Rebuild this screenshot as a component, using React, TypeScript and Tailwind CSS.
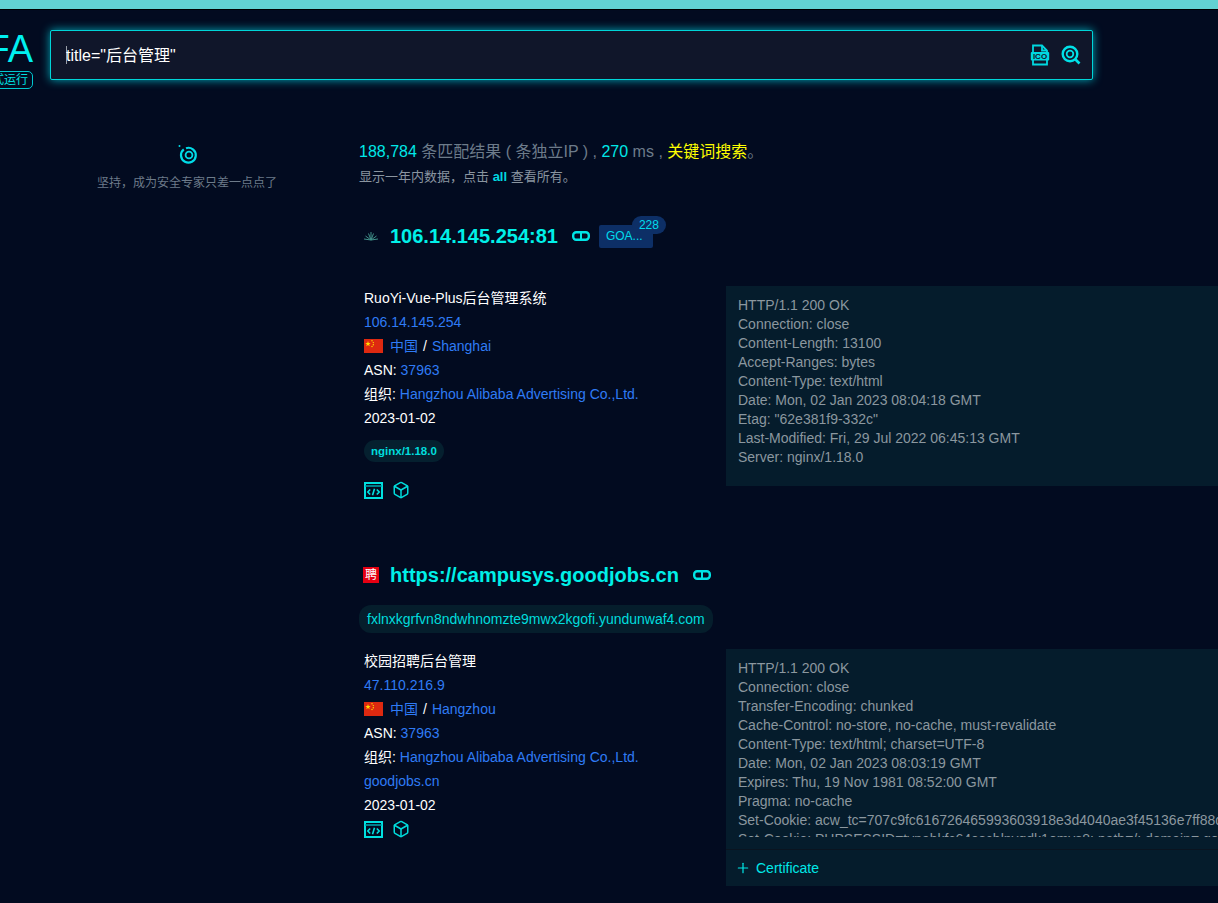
import React from 'react';
import { Box, Plus } from 'lucide-react';

const font = { fontFamily: '"Liberation Sans", "Noto Sans CJK SC", sans-serif' };

function LinkIcon() {
  return (
    <svg width="18" height="10" viewBox="0 0 18 10" fill="none" stroke="#00e5e5" className="shrink-0">
      <rect x="1.200" y="1.300" width="15.600" height="7.400" rx="3" strokeWidth="2.400" />
      <path d="M9 1.500V8.500" strokeWidth="2" />
    </svg>
  );
}

function CodeIcon() {
  return (
    <svg width="19" height="17" viewBox="0 0 19 17" fill="none" className="shrink-0">
      <rect x="1" y="1" width="17" height="15" stroke="#00e0e0" strokeWidth="2" />
      <path d="M1 4H18" stroke="#00a8b0" strokeWidth="1.500" />
      <path d="M6.200 7.500L3.800 10L6.200 12.500M12.800 7.500L15.200 10L12.800 12.500M10.500 6.800L8.500 13.200" stroke="#00e0e0" strokeWidth="1.600" />
    </svg>
  );
}

function ActionIcons() {
  return (
    <div className="flex items-center gap-[9px]">
      <CodeIcon />
      <Box size={18} strokeWidth={2} color="#00dcdc" />
    </div>
  );
}

function Flag() {
  return (
    <svg width="19" height="14" viewBox="0 0 19 14" className="shrink-0">
      <rect width="19" height="14" fill="#de2910" />
      <path d="M4 2l.7 2h2l-1.600 1.200.6 2L4 6l-1.700 1.200.6-2L1.300 4h2z" fill="#ffde00" />
      <circle cx="8" cy="1.800" r=".7" fill="#ffde00" />
      <circle cx="9.300" cy="3.600" r=".7" fill="#ffde00" />
      <circle cx="9.300" cy="5.800" r=".7" fill="#ffde00" />
      <circle cx="8" cy="7.500" r=".7" fill="#ffde00" />
    </svg>
  );
}

function Info({ title, ip, city, domain, date }: { title: string; ip: string; city: string; domain?: string; date: string }) {
  return (
    <div className="text-[14px] leading-[24px] text-white">
      <div>{title}</div>
      <div className="text-[#2f7bf5]">{ip}</div>
      <div className="flex items-center">
        <Flag />
        <span className="ml-[7px] text-[#2f7bf5]">中国</span>
        <span className="mx-[5px]">/</span>
        <span className="text-[#2f7bf5]">{city}</span>
      </div>
      <div>
        ASN: <span className="text-[#2f7bf5]">37963</span>
      </div>
      <div>
        组织: <span className="text-[#2f7bf5]">Hangzhou Alibaba Advertising Co.,Ltd.</span>
      </div>
      {domain && <div className="text-[#2f7bf5]">{domain}</div>}
      <div>{date}</div>
    </div>
  );
}

function Banner({ lines, className }: { lines: string[]; className: string }) {
  return (
    <div className={`overflow-hidden whitespace-nowrap px-3 pt-[10px] text-[14px] leading-[19px] text-[#8b979f] ${className}`}>
      {lines.map((line) => (
        <div key={line}>{line}</div>
      ))}
    </div>
  );
}

export default function App() {
  return (
    <div style={font} className="h-[903px] w-[1218px] overflow-hidden bg-[#020b20]">
      <div className="h-[10px] border-b border-black bg-[#62d2d2]" />

      <header className="flex h-[70px] items-start pt-5">
        <div className="flex h-[60px] w-[50px] shrink-0 flex-col items-end overflow-hidden pr-[17px]">
          <div className="whitespace-nowrap text-[38px] leading-[38px] text-[#00f0f0]">FA</div>
          <div className="mt-[3px] shrink-0 whitespace-nowrap rounded-[5px] border border-[#00c8d0] px-[4px] text-[12px] leading-[16px] text-[#00e0e0]">
            正式运行
          </div>
        </div>
        <div className="flex h-[50px] w-[1043px] items-center rounded-[2px] border border-[#00d5d8] bg-[#10162a] pl-[15px] pr-[11px] shadow-[0_0_10px_#00a8b8]">
          <span className="-mr-[1px] h-[18px] w-[1px] bg-[#9aa0aa]" />
          <span className="flex-1 pt-[2px] text-[16px] text-white">title="后台管理"</span>
          <svg width="20" height="22" viewBox="0 0 20 22" fill="none" className="mr-[11px]">
            <path d="M3 8V1.500H12L17 6.500V20.500H3V16" stroke="#00d8e0" strokeWidth="1.800" />
            <path d="M12 1.500V6.500H17" stroke="#00d8e0" strokeWidth="1.800" />
            <rect x="0.800" y="8" width="18.400" height="8.500" rx="1" fill="#00d8e0" />
            <text x="10" y="15.200" textAnchor="middle" fontSize="8" fontWeight="bold" fill="#10162a" style={font}>
              ICO
            </text>
          </svg>
          <svg width="20" height="20" viewBox="0 0 20 20" fill="none" stroke="#00e0e8">
            <circle cx="9" cy="9" r="7.300" strokeWidth="2.400" />
            <circle cx="9" cy="9" r="3.300" strokeWidth="1.800" />
            <path d="M14 14L18.500 18.500" strokeWidth="2.600" />
          </svg>
        </div>
      </header>

      <main className="flex">
        <aside className="flex w-[359px] shrink-0 flex-col items-center pl-[15px] pt-[63px]">
          <svg width="24" height="24" viewBox="0 0 24 24" fill="none" stroke="#00dce8">
            <circle cx="4.500" cy="3" r="1" fill="#00dce8" stroke="none" />
            <path d="M8.800 6.400A7.400 7.400 0 1 0 11 5.200" strokeWidth="2.200" />
            <circle cx="14" cy="12" r="3.400" strokeWidth="1.800" />
          </svg>
          <div className="mt-[8px] text-[12px] leading-[16px] text-[#6d7b8a]">坚持，成为安全专家只差一点点了</div>
        </aside>

        <section className="min-w-0 flex-1 pt-[62px]">
          <div className="whitespace-nowrap text-[16px] leading-[20px] text-[#6d7b8a]">
            <span className="text-[#00e8e8]">188,784</span> 条匹配结果 ( 条独立IP ) , <span className="text-[#00e8e8]">270</span> ms , <span className="text-[#ffff00]">关键词搜索</span>。
          </div>
          <div className="mt-[5px] text-[13px] leading-[20px] text-[#8a95a0]">
            显示一年内数据，点击 <span className="font-bold text-[#00d8e0]">all</span> 查看所有。
          </div>

          <div className="mt-[29px] flex h-10 items-center pl-[5px]">
            <svg width="14" height="10" viewBox="0 0 14 10" fill="none" stroke="#3f8f88" strokeWidth="1" className="mr-[12px] shrink-0">
              <path d="M7 9V1M7 9L4.500 2.500M7 9L9.500 2.500M7 9L1.500 5M7 9L12.500 5M7 9L0 8M7 9L14 8" />
            </svg>
            <span className="text-[20px] font-bold text-[#00f0e8]">106.14.145.254:81</span>
            <span className="ml-[14px]">
              <LinkIcon />
            </span>
            <span className="relative ml-[9px] flex h-[23px] w-[54px] items-center rounded-[2px] bg-[#0d2f66] pl-[7px] text-[12px] text-[#00dcec]">
              GOA...
              <span className="absolute -top-[9px] left-[33px] rounded-full bg-[#0d2f66] px-[7px] text-[12px] leading-[18px] text-[#00dcec]">
                228
              </span>
            </span>
          </div>

          <div className="mt-[30px] flex">
            <div className="w-[367px] shrink-0 pl-[5px]">
              <Info title="RuoYi-Vue-Plus后台管理系统" ip="106.14.145.254" city="Shanghai" date="2023-01-02" />
              <div className="mt-[10px] inline-block rounded-full bg-[#05202f] px-[7px] text-[11.5px] font-bold leading-[22px] text-[#00dcdc]">
                nginx/1.18.0
              </div>
              <div className="mt-[19px]">
                <ActionIcons />
              </div>
            </div>
            <Banner
              className="h-[200px] flex-1 bg-[#051c2c]"
              lines={[
                'HTTP/1.1 200 OK',
                'Connection: close',
                'Content-Length: 13100',
                'Accept-Ranges: bytes',
                'Content-Type: text/html',
                'Date: Mon, 02 Jan 2023 08:04:18 GMT',
                'Etag: "62e381f9-332c"',
                'Last-Modified: Fri, 29 Jul 2022 06:45:13 GMT',
                'Server: nginx/1.18.0',
              ]}
            />
          </div>

          <div className="mt-[56px] flex h-10 items-center pl-[4px]">
            <span className="mr-[11px] flex h-4 w-4 shrink-0 items-center justify-center bg-[#e60012] text-[12px] leading-none text-white">聘</span>
            <span className="text-[20px] font-bold text-[#00f0e8]">https://campusys.goodjobs.cn</span>
            <span className="ml-[14px]">
              <LinkIcon />
            </span>
          </div>
          <div className="mt-[10px] inline-block h-[28px] rounded-[12px] bg-[#051e2c] px-2 text-[14px] leading-[28px] text-[#00dcdc]">
            fxlnxkgrfvn8ndwhnomzte9mwx2kgofi.yundunwaf4.com
          </div>

          <div className="mt-[16px] flex">
            <div className="w-[367px] shrink-0 pl-[5px]">
              <Info title="校园招聘后台管理" ip="47.110.216.9" city="Hangzhou" domain="goodjobs.cn" date="2023-01-02" />
              <div className="mt-[3px]">
                <ActionIcons />
              </div>
            </div>
            <div className="min-w-0 flex-1 bg-[#051c2c]">
              <Banner
                className="mb-[12px] h-[188px]"
                lines={[
                  'HTTP/1.1 200 OK',
                  'Connection: close',
                  'Transfer-Encoding: chunked',
                  'Cache-Control: no-store, no-cache, must-revalidate',
                  'Content-Type: text/html; charset=UTF-8',
                  'Date: Mon, 02 Jan 2023 08:03:19 GMT',
                  'Expires: Thu, 19 Nov 1981 08:52:00 GMT',
                  'Pragma: no-cache',
                  'Set-Cookie: acw_tc=707c9fc616726465993603918e3d4040ae3f45136e7ff88d',
                  'Set-Cookie: PHPSESSID=tvnabkfc64eschlnvqdk1omvs8; path=/; domain=.goodjobs.cn',
                ]}
              />
              <div className="flex h-[37px] items-center border-t border-[#0a1420] pl-[9px] text-[14px] text-[#00e8e8]">
                <Plus size={16} strokeWidth={1.800} />
                <span className="ml-[5px]">Certificate</span>
              </div>
            </div>
          </div>
        </section>
      </main>
    </div>
  );
}
